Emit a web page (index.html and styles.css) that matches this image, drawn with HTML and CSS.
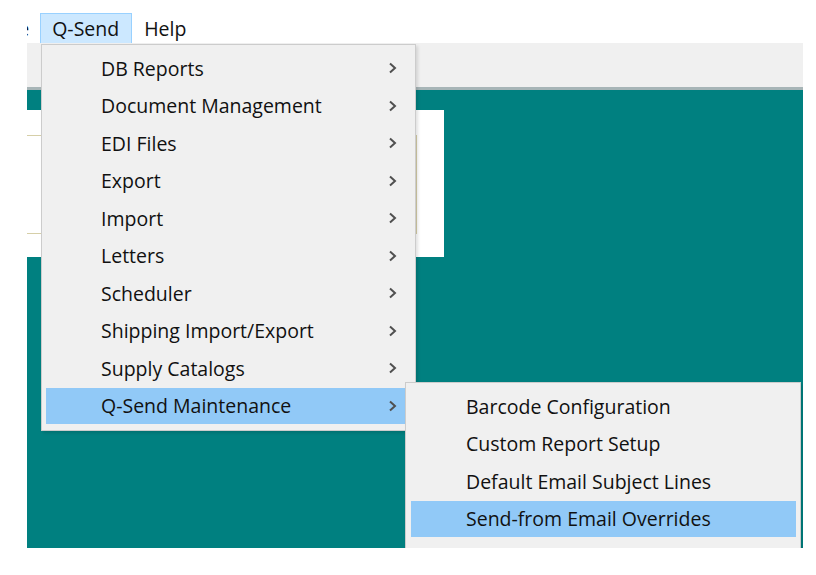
FILE: index.html
```html
<!DOCTYPE html>
<html lang="en">
<head>
  <meta charset="UTF-8" />
  <title>Q-Send</title>
  <link rel="stylesheet" href="styles.css">
</head>
<body>
  <div class="app">
    <div class="menubar">
      <div class="menubar-item first">Maintenance</div>
      <div class="menubar-item open">Q-Send</div>
      <div class="menubar-item">Help</div>
    </div>

    <div class="toolbar"></div>

    <div class="workspace">
      <div class="panel">
        <div class="panel-box"></div>
      </div>
    </div>

    <!-- Q-Send dropdown -->
    <div class="menu main-menu">
      <div class="menu-item">DB Reports<span class="arrow"><svg width="9" height="12" viewBox="0 0 9 12"><polyline points="2,1.5 7,6 2,10.5" /></svg></span></div>
      <div class="menu-item">Document Management<span class="arrow"><svg width="9" height="12" viewBox="0 0 9 12"><polyline points="2,1.5 7,6 2,10.5" /></svg></span></div>
      <div class="menu-item">EDI Files<span class="arrow"><svg width="9" height="12" viewBox="0 0 9 12"><polyline points="2,1.5 7,6 2,10.5" /></svg></span></div>
      <div class="menu-item">Export<span class="arrow"><svg width="9" height="12" viewBox="0 0 9 12"><polyline points="2,1.5 7,6 2,10.5" /></svg></span></div>
      <div class="menu-item">Import<span class="arrow"><svg width="9" height="12" viewBox="0 0 9 12"><polyline points="2,1.5 7,6 2,10.5" /></svg></span></div>
      <div class="menu-item">Letters<span class="arrow"><svg width="9" height="12" viewBox="0 0 9 12"><polyline points="2,1.5 7,6 2,10.5" /></svg></span></div>
      <div class="menu-item">Scheduler<span class="arrow"><svg width="9" height="12" viewBox="0 0 9 12"><polyline points="2,1.5 7,6 2,10.5" /></svg></span></div>
      <div class="menu-item">Shipping Import/Export<span class="arrow"><svg width="9" height="12" viewBox="0 0 9 12"><polyline points="2,1.5 7,6 2,10.5" /></svg></span></div>
      <div class="menu-item">Supply Catalogs<span class="arrow"><svg width="9" height="12" viewBox="0 0 9 12"><polyline points="2,1.5 7,6 2,10.5" /></svg></span></div>
      <div class="menu-item active">Q-Send Maintenance<span class="arrow"><svg width="9" height="12" viewBox="0 0 9 12"><polyline points="2,1.5 7,6 2,10.5" /></svg></span></div>
    </div>

    <!-- Q-Send Maintenance submenu -->
    <div class="menu sub-menu">
      <div class="menu-item">Barcode Configuration</div>
      <div class="menu-item">Custom Report Setup</div>
      <div class="menu-item">Default Email Subject Lines</div>
      <div class="menu-item active">Send-from Email Overrides</div>
      <div class="menu-item">Client Communications</div>
    </div>
  </div>
</body>
</html>
```

FILE: styles.css
```css
body {
  margin: 0;
  background: #fff;
  font-family: "Open Sans", "Noto Sans", sans-serif;
  font-size: 19.5px;
  color: #111;
}
.app {
  position: relative;
  width: 776px;
  height: 548px;
  margin-left: 27px;
  overflow: hidden;
  display: flex;
  flex-direction: column;
  background: #fff;
}
.menubar {
  height: 43px;
  display: flex;
  align-items: flex-start;
  flex-shrink: 0;
}
.menubar-item {
  margin-top: 13px;
  height: 31px;
  box-sizing: border-box;
  padding: 0 12px 0 11px;
  border: 1px solid transparent;
  display: flex;
  align-items: center;
  line-height: 1;
}
.menubar-item.first {
  margin-left: -128px;
  padding-right: 10px;
}
.menubar-item.open {
  background: #cce8ff;
  border-color: #99d1ff;
}
.toolbar {
  height: 44px;
  flex-shrink: 0;
  background: #f0f0f0;
  border-bottom: 3px solid #a7b5b7;
}
.workspace {
  flex: 1;
  background: #008080;
  padding-top: 20px;
}
.panel {
  width: 417px;
  height: 147px;
  background: #fff;
  overflow: hidden;
}
.panel-box {
  margin: 25px 0 0 -10px;
  width: 400px;
  height: 99px;
  box-sizing: border-box;
  border: 1px solid #d6cfa8;
}
.menu {
  position: absolute;
  box-sizing: border-box;
  background: #f0f0f0;
  border: 1px solid #cccccc;
  padding: 5px 4px;
  box-shadow: 2px 2px 3px rgba(0, 0, 0, 0.12);
}
.main-menu {
  left: 14px;
  top: 44px;
  width: 375px;
  z-index: 1;
}
.sub-menu {
  left: 378px;
  top: 382px;
  width: 396px;
  height: 220px;
  padding-left: 5px;
  z-index: 2;
}
.menu-item {
  height: 36px;
  margin-bottom: 1.5px;
  display: flex;
  align-items: center;
  padding-left: 55px;
  padding-right: 14px;
  white-space: nowrap;
}
.menu-item.active {
  background: #91c9f7;
}
.arrow {
  margin-left: auto;
  display: flex;
}
.arrow polyline {
  fill: none;
  stroke: #505050;
  stroke-width: 2;
}
```
